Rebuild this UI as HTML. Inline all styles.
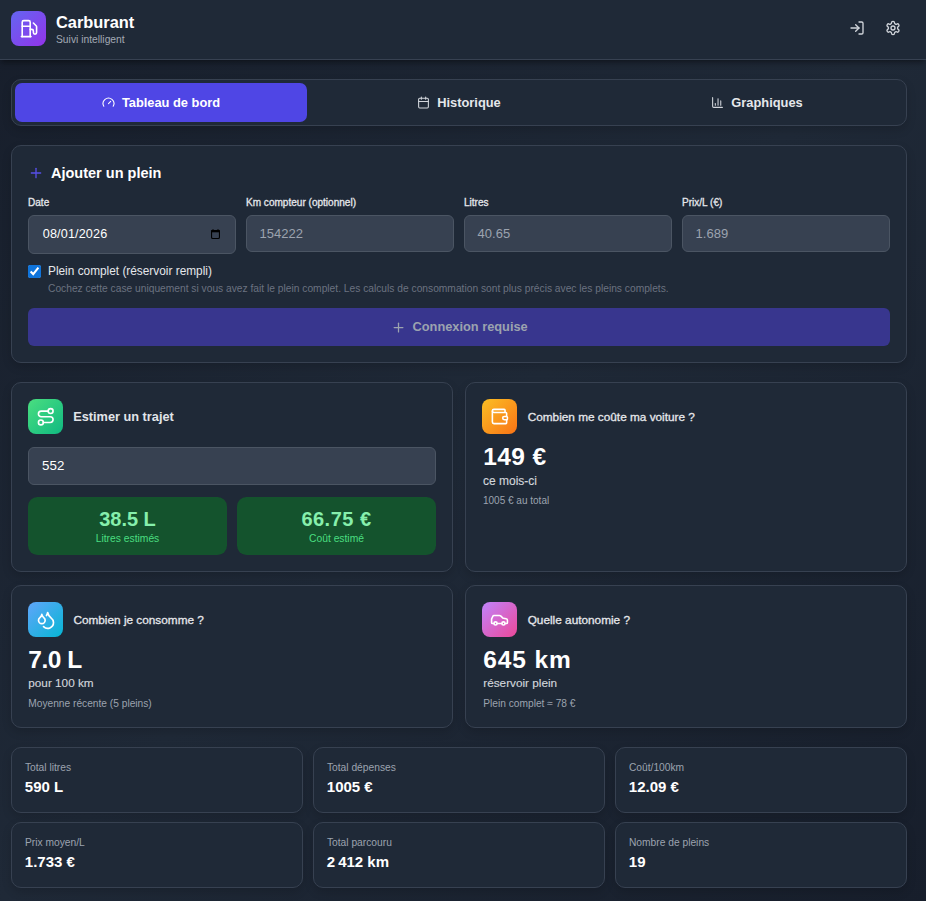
<!DOCTYPE html>
<html><head><meta charset="utf-8"><title>Carburant</title>
<style>
html,body{margin:0;padding:0;}
html{background:#1b2331;}
body{width:926px;height:901px;overflow:hidden;position:relative;font-family:"Liberation Sans",sans-serif;
background:linear-gradient(to bottom right,#171e2b,#1f2937,#171e2b);}
.b{position:absolute;}
.t{position:absolute;line-height:1;white-space:nowrap;}
.ic{position:absolute;display:block;}
.tab{position:absolute;display:flex;align-items:center;justify-content:center;gap:7px;font-size:12.85px;font-weight:700;line-height:1;white-space:nowrap;}
.tab svg{display:block;flex:none;}
</style></head><body>
<div class="b" style="left:0px;top:0px;width:926px;height:60px;background:#1f2937;box-shadow:0 4px 6px -1px rgba(0,0,0,.3),0 2px 4px -2px rgba(0,0,0,.25);"></div>
<div class="b" style="left:0px;top:59px;width:926px;height:1px;background:#374151;"></div>
<div class="b" style="left:11px;top:11px;width:35px;height:35px;border-radius:8px;background:linear-gradient(135deg,#6366f1,#9333ea);"></div>
<svg class="ic" style="left:19px;top:18.6px;width:19.2px;height:19.2px" viewBox="0 0 24 24" fill="none" stroke="#fff" stroke-width="2" stroke-linecap="round" stroke-linejoin="round"><line x1="3" x2="15" y1="22" y2="22"/><line x1="4" x2="14" y1="9" y2="9"/><path d="M14 22V4a2 2 0 0 0-2-2H6a2 2 0 0 0-2 2v18"/><path d="M14 13h2a2 2 0 0 1 2 2v2a2 2 0 0 0 2 2a2 2 0 0 0 2-2V9.83a2 2 0 0 0-.59-1.42L18 5"/></svg>
<div class="t" style="left:56px;top:14.02px;font-size:16.4px;font-weight:700;color:#ffffff;">Carburant</div>
<div class="t" style="left:56px;top:34.58px;font-size:10.3px;font-weight:400;color:#a3aab5;">Suivi intelligent</div>
<svg class="ic" style="left:849px;top:20px;width:16px;height:16px" viewBox="0 0 24 24" fill="none" stroke="#d1d5db" stroke-width="2" stroke-linecap="round" stroke-linejoin="round"><path d="M15 3h4a2 2 0 0 1 2 2v14a2 2 0 0 1-2 2h-4"/><polyline points="10 17 15 12 10 7"/><line x1="15" x2="3" y1="12" y2="12"/></svg>
<svg class="ic" style="left:885px;top:20px;width:16px;height:16px" viewBox="0 0 24 24" fill="none" stroke="#d1d5db" stroke-width="2" stroke-linecap="round" stroke-linejoin="round"><path d="M12.22 2h-.44a2 2 0 0 0-2 2v.18a2 2 0 0 1-1 1.73l-.43.25a2 2 0 0 1-2 0l-.15-.08a2 2 0 0 0-2.73.73l-.22.38a2 2 0 0 0 .73 2.73l.15.1a2 2 0 0 1 1 1.72v.51a2 2 0 0 1-1 1.74l-.15.09a2 2 0 0 0-.73 2.73l.22.38a2 2 0 0 0 2.73.73l.15-.08a2 2 0 0 1 2 0l.43.25a2 2 0 0 1 1 1.73V20a2 2 0 0 0 2 2h.44a2 2 0 0 0 2-2v-.18a2 2 0 0 1 1-1.73l.43-.25a2 2 0 0 1 2 0l.15.08a2 2 0 0 0 2.73-.73l.22-.39a2 2 0 0 0-.73-2.73l-.15-.08a2 2 0 0 1-1-1.74v-.5a2 2 0 0 1 1-1.74l.15-.09a2 2 0 0 0 .73-2.73l-.22-.38a2 2 0 0 0-2.73-.73l-.15.08a2 2 0 0 1-2 0l-.43-.25a2 2 0 0 1-1-1.73V4a2 2 0 0 0-2-2z"/><circle cx="12" cy="12" r="3"/></svg>
<div class="b" style="left:11px;top:79px;width:896px;height:47px;border:1px solid #374151;border-radius:10px;background:#1f2937;box-sizing:border-box;box-shadow:0 4px 10px rgba(0,0,0,.15);"></div>
<div class="b" style="left:15px;top:83px;width:292px;height:39px;background:#4f46e5;border-radius:7px;"></div>
<div class="tab" style="left:15px;top:83px;width:292px;height:39px;color:#ffffff"><svg width="13" height="13" viewBox="0 0 24 24" fill="none" stroke="#ffffff" stroke-width="2" stroke-linecap="round" stroke-linejoin="round"><path d="m12 14 4-4"/><path d="M3.34 19a10 10 0 1 1 17.32 0"/></svg><span style="position:relative;top:0.7px">Tableau de bord</span></div>
<div class="tab" style="left:313px;top:83px;width:292px;height:39px;color:#e5e7eb"><svg width="13" height="13" viewBox="0 0 24 24" fill="none" stroke="#d1d5db" stroke-width="2" stroke-linecap="round" stroke-linejoin="round"><path d="M8 2v4"/><path d="M16 2v4"/><rect width="18" height="18" x="3" y="4" rx="2"/><path d="M3 10h18"/></svg><span style="position:relative;top:0.7px">Historique</span></div>
<div class="tab" style="left:611px;top:83px;width:292px;height:39px;color:#e5e7eb"><svg width="13" height="13" viewBox="0 0 24 24" fill="none" stroke="#d1d5db" stroke-width="2" stroke-linecap="round" stroke-linejoin="round"><path d="M3 3v16a2 2 0 0 0 2 2h16"/><path d="M18 17V9"/><path d="M13 17V5"/><path d="M8 17v-3"/></svg><span style="position:relative;top:0.7px">Graphiques</span></div>
<div class="b" style="left:11px;top:145px;width:896px;height:218px;border:1px solid #374151;border-radius:10px;background:#1f2937;box-sizing:border-box;box-shadow:0 4px 10px rgba(0,0,0,.15);"></div>
<svg class="ic" style="left:28px;top:165px;width:16px;height:16px" viewBox="0 0 24 24" fill="none" stroke="#574fe8" stroke-width="2" stroke-linecap="round" stroke-linejoin="round"><path d="M5 12h14"/><path d="M12 5v14"/></svg>
<div class="t" style="left:51px;top:165.53px;font-size:14.5px;font-weight:700;color:#ffffff;">Ajouter un plein</div>
<div class="t" style="left:28px;top:198.29px;font-size:10.05px;font-weight:400;color:#e5e7eb;-webkit-text-stroke:0.3px currentColor;">Date</div>
<div class="b" style="left:28px;top:215px;width:208px;height:39px;background:#374151;border:1px solid #4b5563;border-radius:6px;box-sizing:border-box;"></div>
<div class="t" style="left:42.8px;top:227.58px;font-size:12.6px;font-weight:400;color:#ffffff;letter-spacing:0.15px;">08/01/2026</div>
<div class="t" style="left:246px;top:198.29px;font-size:10.05px;font-weight:400;color:#e5e7eb;-webkit-text-stroke:0.3px currentColor;">Km compteur (optionnel)</div>
<div class="b" style="left:246px;top:215px;width:208px;height:37px;background:#374151;border:1px solid #4b5563;border-radius:6px;box-sizing:border-box;"></div>
<div class="t" style="left:259.6px;top:227.10px;font-size:13px;font-weight:400;color:#9ca3af;">154222</div>
<div class="t" style="left:464px;top:198.29px;font-size:10.05px;font-weight:400;color:#e5e7eb;-webkit-text-stroke:0.3px currentColor;">Litres</div>
<div class="b" style="left:464px;top:215px;width:208px;height:37px;background:#374151;border:1px solid #4b5563;border-radius:6px;box-sizing:border-box;"></div>
<div class="t" style="left:477.6px;top:227.10px;font-size:13px;font-weight:400;color:#9ca3af;">40.65</div>
<div class="t" style="left:682px;top:198.29px;font-size:10.05px;font-weight:400;color:#e5e7eb;-webkit-text-stroke:0.3px currentColor;">Prix/L (€)</div>
<div class="b" style="left:682px;top:215px;width:208px;height:37px;background:#374151;border:1px solid #4b5563;border-radius:6px;box-sizing:border-box;"></div>
<div class="t" style="left:695.6px;top:227.10px;font-size:13px;font-weight:400;color:#9ca3af;">1.689</div>
<svg class="ic" style="left:211px;top:229px;width:9px;height:10px" viewBox="0 0 9 10"><rect x="0.55" y="1.55" width="7.9" height="7.9" rx="1.3" fill="none" stroke="#000" stroke-width="1.1"/><rect x="0" y="1.2" width="9" height="2.1" fill="#000"/><rect x="0.9" y="0.4" width="2.2" height="1.4" rx="0.5" fill="#000"/><rect x="5.9" y="0.4" width="2.2" height="1.4" rx="0.5" fill="#000"/></svg>
<input type="checkbox" checked style="position:absolute;left:28px;top:265px;width:13px;height:13px;margin:0;accent-color:#0f74db;">
<div class="t" style="left:48px;top:266.47px;font-size:11.85px;font-weight:400;color:#e5e7eb;">Plein complet (réservoir rempli)</div>
<div class="t" style="left:48px;top:283.93px;font-size:10.24px;font-weight:400;color:#6b7280;">Cochez cette case uniquement si vous avez fait le plein complet. Les calculs de consommation sont plus précis avec les pleins complets.</div>
<div class="b" style="left:28px;top:308px;width:862px;height:38px;background:#38368e;border-radius:6px;"></div>
<svg class="ic" style="left:390.5px;top:320.3px;width:15px;height:15px" viewBox="0 0 24 24" fill="none" stroke="#9ca3af" stroke-width="2" stroke-linecap="round" stroke-linejoin="round"><path d="M5 12h14"/><path d="M12 5v14"/></svg>
<div class="t" style="left:412.5px;top:321.06px;font-size:12.8px;font-weight:700;color:#9ca3af;">Connexion requise</div>
<div class="b" style="left:11px;top:382px;width:442px;height:190px;border:1px solid #374151;border-radius:10px;background:#1f2937;box-sizing:border-box;box-shadow:0 4px 10px rgba(0,0,0,.15);"></div>
<div class="b" style="left:465px;top:382px;width:442px;height:190px;border:1px solid #374151;border-radius:10px;background:#1f2937;box-sizing:border-box;box-shadow:0 4px 10px rgba(0,0,0,.15);"></div>
<div class="b" style="left:28px;top:399px;width:35px;height:35px;border-radius:8px;background:linear-gradient(135deg,#4ade80,#10b981);"></div>
<svg class="ic" style="left:35.75px;top:406.75px;width:19.5px;height:19.5px" viewBox="0 0 24 24" fill="none" stroke="#fff" stroke-width="2" stroke-linecap="round" stroke-linejoin="round"><circle cx="6" cy="19" r="3"/><path d="M9 19h8.5a3.5 3.5 0 0 0 0-7h-11a3.5 3.5 0 0 1 0-7H15"/><circle cx="18" cy="5" r="3"/></svg>
<div class="t" style="left:73.2px;top:410.91px;font-size:12.75px;font-weight:700;color:#e1e4e9;">Estimer un trajet</div>
<div class="b" style="left:28px;top:447px;width:408px;height:37.5px;background:#374151;border:1px solid #4b5563;border-radius:6px;box-sizing:border-box;"></div>
<div class="t" style="left:42.1px;top:458.74px;font-size:13.3px;font-weight:400;color:#ffffff;">552</div>
<div class="b" style="left:28px;top:497px;width:199px;height:58px;background:#14532d;border-radius:9.5px;"></div>
<div class="b" style="left:237px;top:497px;width:199px;height:58px;background:#14532d;border-radius:9.5px;"></div>
<div class="t" style="left:28px;top:509.17px;font-size:20px;font-weight:700;color:#86efac;width:199px;text-align:center;">38.5 L</div>
<div class="t" style="left:28px;top:533.58px;font-size:10.3px;font-weight:400;color:#4ade80;width:199px;text-align:center;">Litres estimés</div>
<div class="t" style="left:237px;top:509.17px;font-size:20px;font-weight:700;color:#86efac;width:199px;text-align:center;letter-spacing:0.5px;">66.75 €</div>
<div class="t" style="left:237px;top:533.58px;font-size:10.3px;font-weight:400;color:#4ade80;width:199px;text-align:center;">Coût estimé</div>
<div class="b" style="left:482px;top:399px;width:35px;height:35px;border-radius:8px;background:linear-gradient(135deg,#fbbf24,#f97316);"></div>
<svg class="ic" style="left:490px;top:407px;width:19px;height:19px" viewBox="0 0 24 24" fill="none" stroke="#fff" stroke-width="2" stroke-linecap="round" stroke-linejoin="round"><path d="M19 7V4a1 1 0 0 0-1-1H5a2 2 0 0 0 0 4h15a1 1 0 0 1 1 1v4h-3a2 2 0 0 0 0 4h3a1 1 0 0 0 1-1v-2a1 1 0 0 0-1-1"/><path d="M3 5v14a2 2 0 0 0 2 2h15a1 1 0 0 0 1-1v-4"/></svg>
<div class="t" style="left:527.7px;top:412.41px;font-size:11.8px;font-weight:400;color:#e5e7eb;-webkit-text-stroke:0.3px currentColor;">Combien me coûte ma voiture ?</div>
<div class="t" style="left:483.2px;top:445.26px;font-size:24.5px;font-weight:700;color:#ffffff;letter-spacing:0.4px;">149 €</div>
<div class="t" style="left:483px;top:474.84px;font-size:12px;font-weight:400;color:#d1d5db;-webkit-text-stroke:0.15px currentColor;">ce mois-ci</div>
<div class="t" style="left:483px;top:496.34px;font-size:10px;font-weight:400;color:#9ca3af;">1005 € au total</div>
<div class="b" style="left:11px;top:585px;width:442px;height:143px;border:1px solid #374151;border-radius:10px;background:#1f2937;box-sizing:border-box;box-shadow:0 4px 10px rgba(0,0,0,.15);"></div>
<div class="b" style="left:465px;top:585px;width:442px;height:143px;border:1px solid #374151;border-radius:10px;background:#1f2937;box-sizing:border-box;box-shadow:0 4px 10px rgba(0,0,0,.15);"></div>
<div class="b" style="left:28px;top:602px;width:35px;height:35px;border-radius:8px;background:linear-gradient(135deg,#60a5fa,#06b6d4);"></div>
<svg class="ic" style="left:35.5px;top:609.5px;width:20px;height:20px" viewBox="0 0 24 24" fill="none" stroke="#fff" stroke-width="2" stroke-linecap="round" stroke-linejoin="round"><path d="M7 16.3c2.2 0 4-1.83 4-4.05 0-1.16-.57-2.26-1.71-3.19S7.29 6.75 7 5.3c-.29 1.45-1.14 2.84-2.29 3.76S3 11.1 3 12.25c0 2.22 1.8 4.05 4 4.05z"/><path d="M12.56 6.6A10.97 10.97 0 0 0 14 3.02c.5 2.5 2 4.9 4 6.5s3 3.5 3 5.5a6.98 6.98 0 0 1-11.91 4.97"/></svg>
<div class="t" style="left:73.4px;top:614.51px;font-size:11.8px;font-weight:400;color:#e5e7eb;-webkit-text-stroke:0.3px currentColor;">Combien je consomme ?</div>
<div class="t" style="left:28.3px;top:648.16px;font-size:24.5px;font-weight:700;color:#ffffff;letter-spacing:-0.5px;">7.0 L</div>
<div class="t" style="left:28.3px;top:677.25px;font-size:11.75px;font-weight:400;color:#d1d5db;-webkit-text-stroke:0.15px currentColor;">pour 100 km</div>
<div class="t" style="left:28.3px;top:699.17px;font-size:10.2px;font-weight:400;color:#9ca3af;">Moyenne récente (5 pleins)</div>
<div class="b" style="left:482px;top:602px;width:35px;height:35px;border-radius:8px;background:linear-gradient(135deg,#c084fc,#ec4899);"></div>
<svg class="ic" style="left:490px;top:610px;width:19px;height:19px" viewBox="0 0 24 24" fill="none" stroke="#fff" stroke-width="2" stroke-linecap="round" stroke-linejoin="round"><path d="M19 17h2c.6 0 1-.4 1-1v-3c0-.9-.7-1.7-1.5-1.9C18.7 10.6 16 10 16 10s-1.3-1.4-2.2-2.3c-.5-.4-1.1-.7-1.8-.7H5c-.6 0-1.1.4-1.4.9l-1.4 2.9A3.7 3.7 0 0 0 2 12v4c0 .6.4 1 1 1h2"/><circle cx="7" cy="17" r="2"/><path d="M9 17h6"/><circle cx="17" cy="17" r="2"/></svg>
<div class="t" style="left:527.7px;top:614.51px;font-size:11.8px;font-weight:400;color:#e5e7eb;-webkit-text-stroke:0.3px currentColor;">Quelle autonomie ?</div>
<div class="t" style="left:483.3px;top:648.16px;font-size:24.5px;font-weight:700;color:#ffffff;letter-spacing:0.9px;">645 km</div>
<div class="t" style="left:483.3px;top:677.25px;font-size:11.75px;font-weight:400;color:#d1d5db;-webkit-text-stroke:0.15px currentColor;">réservoir plein</div>
<div class="t" style="left:483.3px;top:699.17px;font-size:10.2px;font-weight:400;color:#9ca3af;">Plein complet ≈ 78 €</div>
<div class="b" style="left:11px;top:747px;width:292px;height:66px;border:1px solid #374151;border-radius:10px;background:#1f2937;box-sizing:border-box;box-shadow:0 4px 10px rgba(0,0,0,.15);"></div>
<div class="t" style="left:24.9px;top:762.72px;font-size:10.25px;font-weight:400;color:#9ca3af;">Total litres</div>
<div class="t" style="left:24.8px;top:779.20px;font-size:15px;font-weight:700;color:#ffffff;">590 L</div>
<div class="b" style="left:313px;top:747px;width:292px;height:66px;border:1px solid #374151;border-radius:10px;background:#1f2937;box-sizing:border-box;box-shadow:0 4px 10px rgba(0,0,0,.15);"></div>
<div class="t" style="left:326.9px;top:762.72px;font-size:10.25px;font-weight:400;color:#9ca3af;">Total dépenses</div>
<div class="t" style="left:326.8px;top:779.20px;font-size:15px;font-weight:700;color:#ffffff;">1005 €</div>
<div class="b" style="left:615px;top:747px;width:292px;height:66px;border:1px solid #374151;border-radius:10px;background:#1f2937;box-sizing:border-box;box-shadow:0 4px 10px rgba(0,0,0,.15);"></div>
<div class="t" style="left:628.9px;top:762.72px;font-size:10.25px;font-weight:400;color:#9ca3af;">Coût/100km</div>
<div class="t" style="left:628.8px;top:779.20px;font-size:15px;font-weight:700;color:#ffffff;">12.09 €</div>
<div class="b" style="left:11px;top:822px;width:292px;height:66px;border:1px solid #374151;border-radius:10px;background:#1f2937;box-sizing:border-box;box-shadow:0 4px 10px rgba(0,0,0,.15);"></div>
<div class="t" style="left:24.9px;top:837.72px;font-size:10.25px;font-weight:400;color:#9ca3af;">Prix moyen/L</div>
<div class="t" style="left:24.8px;top:854.20px;font-size:15px;font-weight:700;color:#ffffff;">1.733 €</div>
<div class="b" style="left:313px;top:822px;width:292px;height:66px;border:1px solid #374151;border-radius:10px;background:#1f2937;box-sizing:border-box;box-shadow:0 4px 10px rgba(0,0,0,.15);"></div>
<div class="t" style="left:326.9px;top:837.72px;font-size:10.25px;font-weight:400;color:#9ca3af;">Total parcouru</div>
<div class="t" style="left:326.8px;top:854.20px;font-size:15px;font-weight:700;color:#ffffff;">2 412 km</div>
<div class="b" style="left:615px;top:822px;width:292px;height:66px;border:1px solid #374151;border-radius:10px;background:#1f2937;box-sizing:border-box;box-shadow:0 4px 10px rgba(0,0,0,.15);"></div>
<div class="t" style="left:628.9px;top:837.72px;font-size:10.25px;font-weight:400;color:#9ca3af;">Nombre de pleins</div>
<div class="t" style="left:628.8px;top:854.20px;font-size:15px;font-weight:700;color:#ffffff;">19</div>
</body></html>
